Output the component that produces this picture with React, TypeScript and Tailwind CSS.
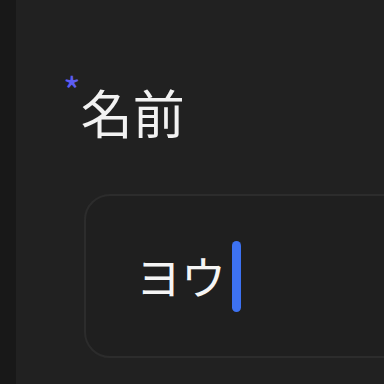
import React from "react";

const App = () => {
  return (
    <div
      className="flex h-[384px] w-[384px] overflow-hidden bg-[#181818]"
      style={{ fontFamily: '"Noto Sans CJK JP", "Noto Sans", sans-serif' }}
    >
      <div className="w-[16px] shrink-0 bg-[#181818]" />
      <div className="flex-1 bg-[#212121] pt-[76px] pl-[47px]">
        {/* label */}
        <div className="flex items-start">
          <span className="mt-[-5px] text-[38px] leading-[38px] text-[#5d5cf2]">*</span>
          <span className="ml-[0px] mt-[5px] text-[52px] leading-[62px] text-[#f2f2f2]">名前</span>
        </div>
        {/* input */}
        <div className="mt-[51px] ml-[21px] flex h-[164px] w-[400px] items-center rounded-[26px] border-2 border-[#2c2c2c] bg-[#1f1f1f] pl-[50px]">
          <span className="text-[45px] leading-[60px] text-[#f5f5f5]">ヨウ</span>
          <span className="ml-[6px] h-[71px] w-[9px] rounded-full bg-[#3d72f2]" />
        </div>
      </div>
    </div>
  );
};

export default App;
